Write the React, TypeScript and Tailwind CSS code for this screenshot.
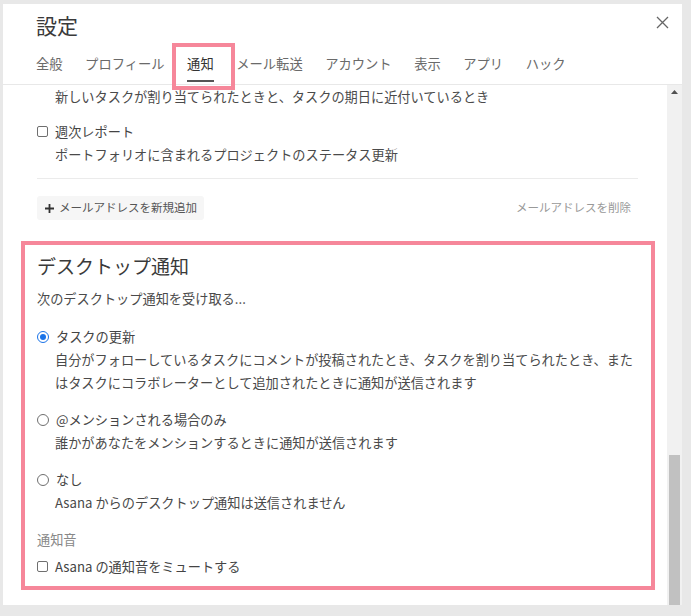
import React from 'react';

const tabs = ['全般', 'プロフィール', '通知', 'メール転送', 'アカウント', '表示', 'アプリ', 'ハック'];

const Checkbox = () => (
  <span className="inline-block w-[11px] h-[11px] shrink-0 rounded-[2px] border border-[#6f6f6f] bg-white" />
);

const Radio = ({ checked }: { checked?: boolean }) =>
  checked ? (
    <span className="flex items-center justify-center w-[12px] h-[12px] shrink-0 rounded-full border-[1.5px] border-[#1a73e8] bg-white">
      <span className="w-[6px] h-[6px] rounded-full bg-[#1a73e8]" />
    </span>
  ) : (
    <span className="inline-block w-[12px] h-[12px] shrink-0 rounded-full border border-[#6f6f6f] bg-white" />
  );

const RadioOption = ({ label, desc, checked }: { label: string; desc: string; checked?: boolean }) => (
  <div className="flex flex-col">
    <div className="flex items-center gap-[7px] leading-[23px] text-[#444]">
      <Radio checked={checked} />
      <span>{label}</span>
    </div>
    <p className="pl-[18px] leading-[23px] text-[#4a4a4a]">{desc}</p>
  </div>
);

export default function App() {
  return (
    <div className="w-[691px] h-[616px] bg-[#e8e8e8] pt-[4px] pl-[3px] pr-[9px] pb-[11px] font-['Noto_Sans_CJK_JP','Liberation_Sans',sans-serif] text-[13.2px] text-[#444]">
      <div className="flex flex-col h-full bg-white">
        {/* header */}
        <div className="relative flex flex-col pl-[33px] pt-[7px] border-b border-[#e8e8e8]">
          <h1 className="text-[21px] leading-[28px] text-[#3a3a3a] font-normal">設定</h1>
          <button className="absolute right-[13px] top-[12px] text-[#666]">
            <svg width="13" height="13" viewBox="0 0 13 13" fill="none" stroke="currentColor" strokeWidth="1.3">
              <path d="M1 1l11 11M12 1L1 12" />
            </svg>
          </button>
          <nav className="flex items-start gap-[22.5px] mt-[15px] mb-[2px] text-[13.3px]">
            {tabs.map((t) =>
              t === '通知' ? (
                <span key={t} className="relative leading-[20px] pb-[6px] border-b-2 border-[#555] text-[#333]">
                  {t}
                  <span className="absolute -left-[15px] -right-[21px] -top-[11px] -bottom-[10px] border-[4px] border-[#f6879a] z-10" />
                </span>
              ) : (
                <span key={t} className="leading-[20px] pb-[8px] text-[#6a6a6a]">
                  {t}
                </span>
              )
            )}
          </nav>
        </div>

        {/* body */}
        <div className="flex flex-1 min-h-0 overflow-hidden">
          <div className="flex-1 flex flex-col pl-[34px] pr-[29px]">
            <p className="pl-[18px] leading-[23px] text-[#4a4a4a]">新しいタスクが割り当てられたときと、タスクの期日に近付いているとき</p>

            <div className="flex items-center gap-[7px] mt-[12px] leading-[23px]">
              <Checkbox />
              <span>週次レポート</span>
            </div>
            <p className="pl-[18px] leading-[23px] text-[#4a4a4a]">ポートフォリオに含まれるプロジェクトのステータス更新</p>

            <div className="mt-[12px] border-t border-[#ebebeb]" />

            <div className="flex items-center justify-between mt-[17px] text-[11.5px]">
              <button className="flex items-center gap-[5px] h-[24px] pl-[8px] pr-[7px] rounded-[3px] bg-[#f6f6f6] text-[#555]">
                <svg width="9" height="9" viewBox="0 0 9 9" fill="none" stroke="#333" strokeWidth="1.8">
                  <path d="M4.5 0v9M0 4.5h9" />
                </svg>
                メールアドレスを新規追加
              </button>
              <button className="mr-[7px] text-[#999]">メールアドレスを削除</button>
            </div>

            <section className="flex flex-col mt-[21px] -ml-[16px] -mr-[17px] pl-[12px] pr-[13px] pt-[7px] pb-[8px] border-[4px] border-[#f6879a]">
              <h2 className="text-[19px] leading-[28px] text-[#3a3a3a] font-normal">デスクトップ通知</h2>
              <p className="mt-[7px] leading-[23px] text-[#4a4a4a]">次のデスクトップ通知を受け取る...</p>

              <div className="flex flex-col gap-[14px] mt-[15px]">
                <RadioOption
                  checked
                  label="タスクの更新"
                  desc="自分がフォローしているタスクにコメントが投稿されたとき、タスクを割り当てられたとき、またはタスクにコラボレーターとして追加されたときに通知が送信されます"
                />
                <RadioOption label="@メンションされる場合のみ" desc="誰かがあなたをメンションするときに通知が送信されます" />
                <RadioOption label="なし" desc="Asana からのデスクトップ通知は送信されません" />
              </div>

              <p className="mt-[14px] leading-[23px] text-[#888]">通知音</p>
              <div className="flex items-center gap-[7px] mt-[4px] leading-[23px]">
                <Checkbox />
                <span>Asana の通知音をミュートする</span>
              </div>
            </section>
          </div>

          {/* scrollbar */}
          <div className="flex flex-col w-[15px] bg-[#f1f1f1]">
            <div className="flex justify-center pt-[5px] h-[16px]">
              <svg width="7" height="4" viewBox="0 0 7 4">
                <path d="M0 4L3.5 0L7 4z" fill="#505050" />
              </svg>
            </div>
            <div className="flex-1" />
            <div className="h-[150px] mx-[2px] bg-[#c1c1c1]" />
          </div>
        </div>
      </div>
    </div>
  );
}
